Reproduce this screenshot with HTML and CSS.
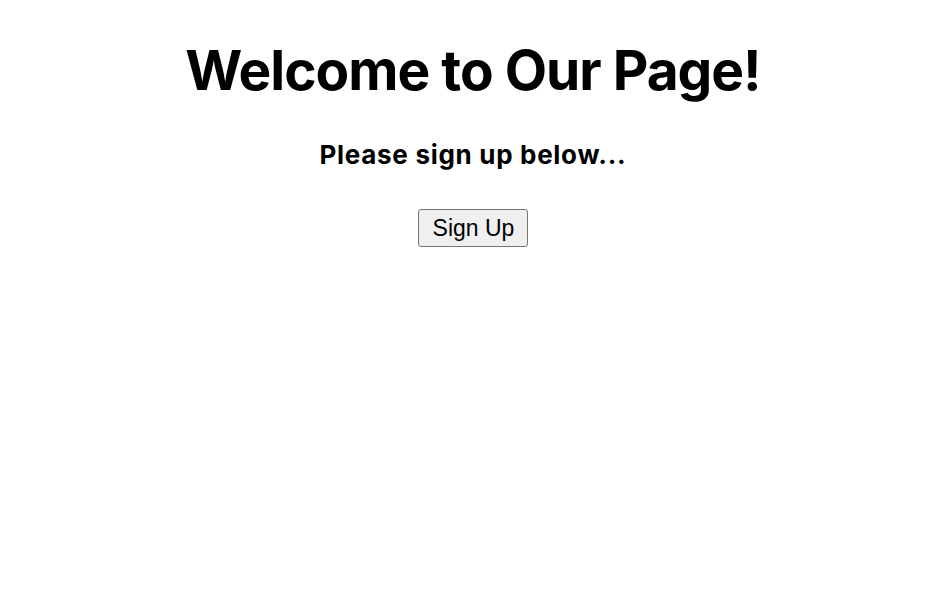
FILE: index.html
```html
<!DOCTYPE html>
<html>
<head>
<meta charset="utf-8">
<link rel="stylesheet" href="styles.css">
</head>
<body>
<main class="page">
  <h1 class="title">Welcome to Our Page!</h1>
  <h2 class="subtitle">Please sign up below...</h2>
  <button class="signup">Sign Up</button>
</main>
</body>
</html>
```
FILE: styles.css
```css
body {
  margin: 0;
  background: #fff;
  font-family: Inter, "Liberation Sans", sans-serif;
  color: #000;
}
.page {
  display: flex;
  flex-direction: column;
  align-items: center;
  padding-top: 38px;
  padding-left: 6px;
}
.title {
  margin: 0;
  font-size: 55px;
  font-weight: 700;
  line-height: 64px;
  letter-spacing: -1px;
}
.subtitle {
  margin: 37px 0 0;
  font-size: 26px;
  font-weight: 700;
  line-height: 32px;
  letter-spacing: 0.7px;
}
.signup {
  margin-top: 38px;
  font-family: "Liberation Sans", Arial, sans-serif;
  font-size: 23px;
  padding: 5px 13px 4px 14px;
  background: #efefef;
  border: 1px solid #767676;
  border-radius: 3px;
  color: #000;
}
```
